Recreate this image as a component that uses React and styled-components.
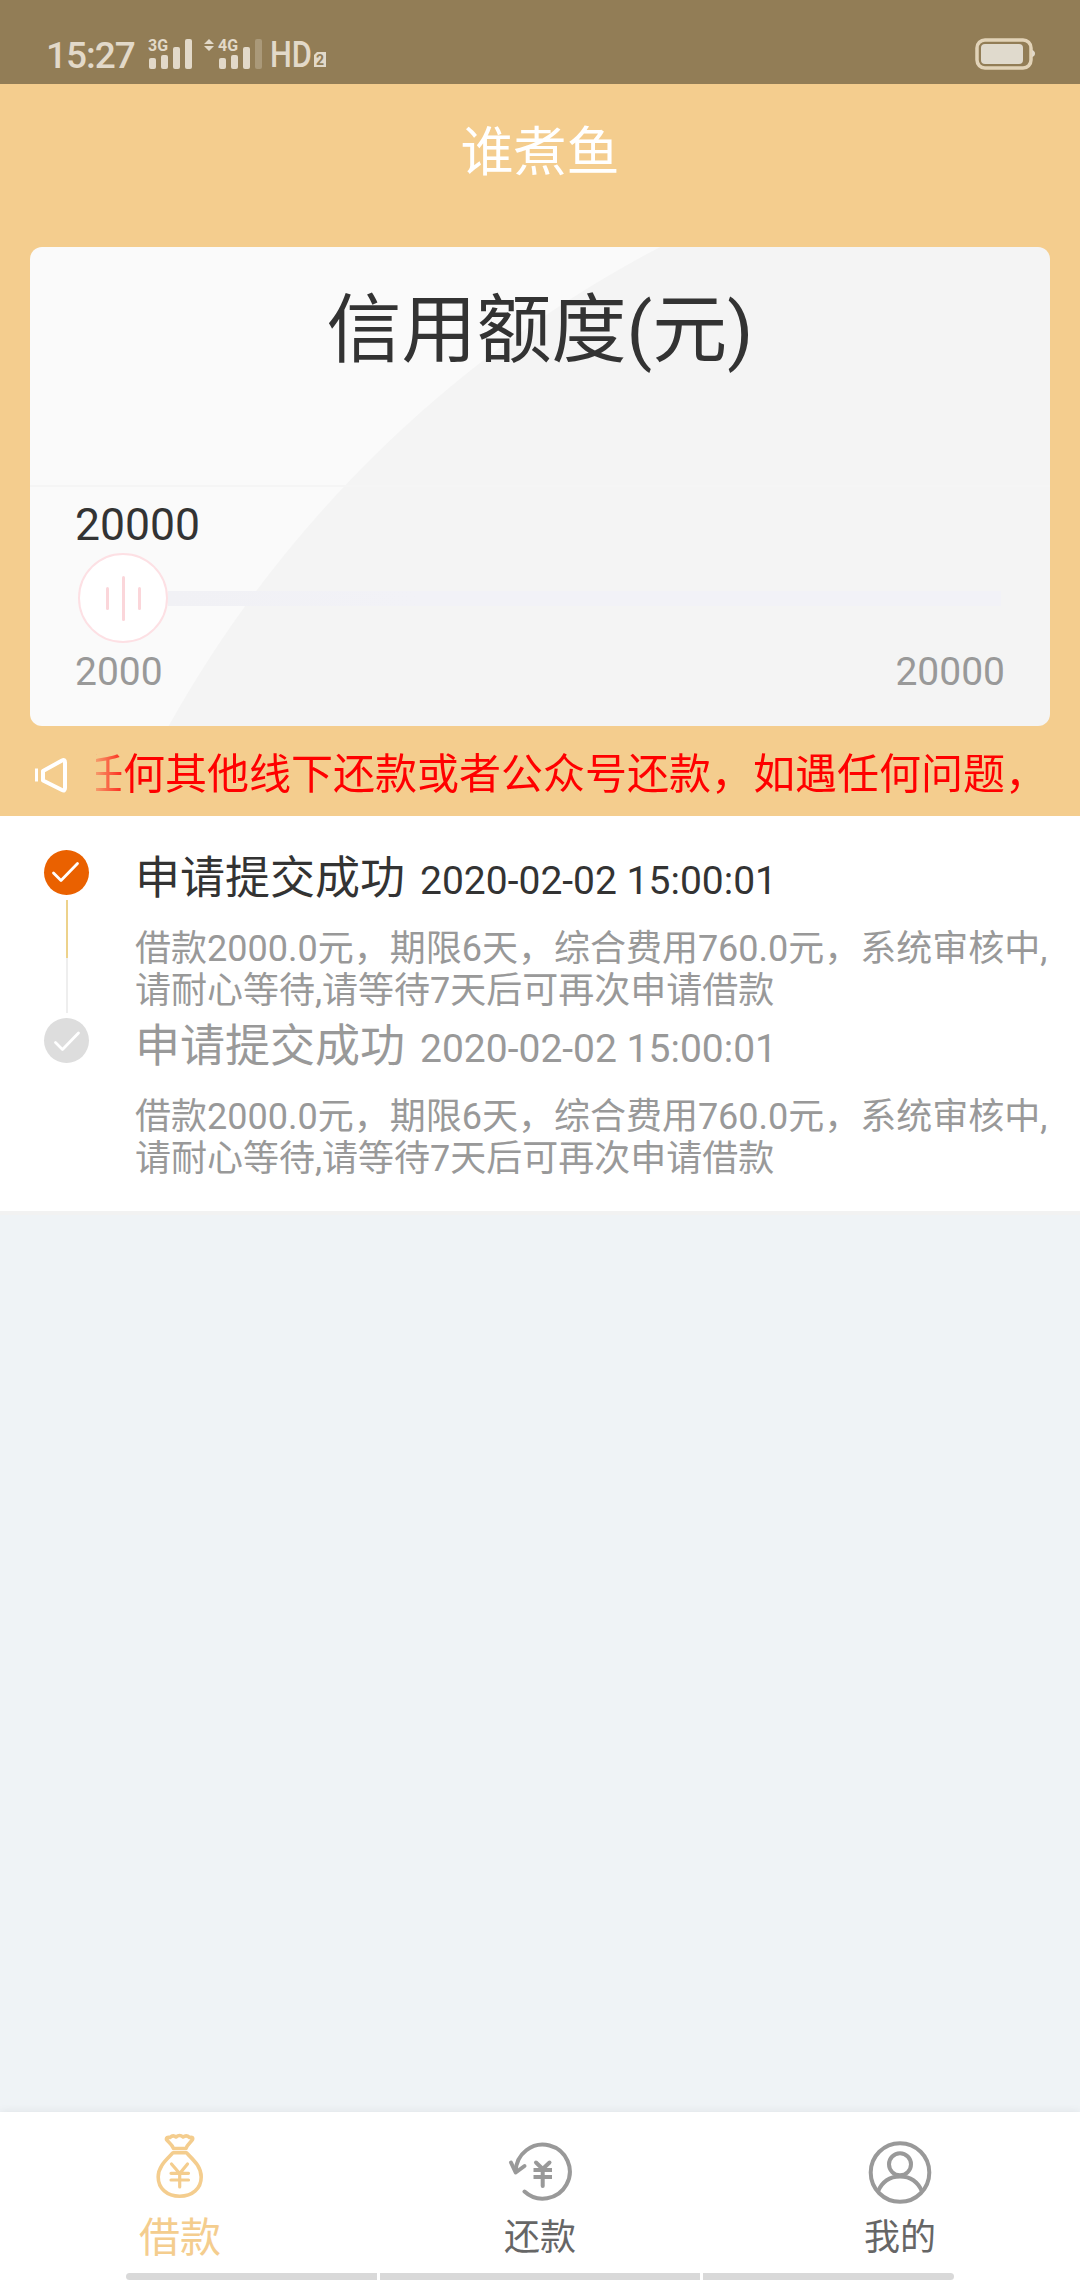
import React, { useState } from "react";
import styled, { createGlobalStyle } from "styled-components";

const GlobalStyle = createGlobalStyle`
  * {
    box-sizing: border-box;
  }
  body {
    margin: 0;
    background-color: #eff3f6;
    font-family: Roboto, "Noto Sans CJK SC", sans-serif;
    color: #333;
  }
`;

const Page = styled.div`
  display: flex;
  flex-direction: column;
  height: 2280px;
  width: 1080px;
  overflow: hidden;
`;

const StatusBar = styled.div`
  display: flex;
  align-items: flex-end;
  justify-content: space-between;
  height: 84px;
  padding: 0 44px 10px 46px;
  background-color: #927d56;
  color: #e2d9c9;
`;

const StatusGroup = styled.div`
  display: flex;
  align-items: flex-end;
`;

const Clock = styled.span`
  width: 102px;
  font-size: 37px;
  font-weight: 500;
  line-height: 36px;
  letter-spacing: -1px;
`;

const Header = styled.header`
  height: 732px;
  padding: 0 30px;
  background-color: #f4cd8e;
`;

const AppTitle = styled.h1`
  margin: 0;
  height: 163px;
  padding-top: 29px;
  font-size: 53px;
  font-weight: 400;
  line-height: 80px;
  text-align: center;
  color: #fff;
`;

const Card = styled.section`
  display: flex;
  flex-direction: column;
  height: 479px;
  border-radius: 12px;
  background: radial-gradient(
    circle at 1187px 1063px,
    #f4f4f4 1199.5px,
    #fafafa 1200.5px
  );
`;

const CardTitle = styled.h2`
  margin: 0;
  height: 240px;
  padding-top: 28px;
  border-bottom: 2px solid #f5f5f5;
  font-size: 75px;
  font-weight: 400;
  line-height: 110px;
  text-align: center;
`;

const SliderArea = styled.div`
  padding: 12px 45px 0;
`;

const Amount = styled.div`
  height: 53px;
  font-size: 44.5px;
  line-height: 52px;
`;

const SliderTrack = styled.div`
  display: flex;
  align-items: center;
  height: 92px;
  padding-left: 3px;
`;

const Thumb = styled.div`
  display: flex;
  align-items: center;
  justify-content: center;
  gap: 13px;
  width: 90px;
  height: 90px;
  border: 2px solid #fde0e4;
  border-radius: 50%;
  background-color: #fff;
`;

const Grip = styled.span`
  width: 3px;
  height: ${(props) => (props.$tall ? 45 : 23)}px;
  border-radius: 2px;
  background-color: #fbd6da;
`;

const Rail = styled.div`
  flex: 1;
  height: 15px;
  margin-right: 4px;
  background: linear-gradient(to right, #f1f1f5, #f2f2f7 30%);
`;

const Range = styled.div`
  display: flex;
  justify-content: space-between;
  padding-top: 5px;
  font-size: 39px;
  line-height: 46px;
  color: #999;
`;

const Notice = styled.div`
  display: flex;
  align-items: center;
  height: 90px;
  padding: 8px 0 0 2px;
`;

const NoticeText = styled.div`
  flex: 1;
  margin: 0 12px 0 29px;
  overflow: hidden;
  font-size: 42px;
  line-height: 60px;
  white-space: nowrap;
  color: #f00;
  mask-image: linear-gradient(to right, transparent -12px, #000 36px);
`;

const Marquee = styled.span`
  display: inline-block;
  margin-left: -15px;
`;

const Steps = styled.section`
  height: 399px;
  padding-top: 34px;
  border-bottom: 4px solid #f2f2f2;
  background-color: #fff;
`;

const Step = styled.div`
  display: flex;
  height: 168px;
`;

const StepRail = styled.div`
  display: flex;
  flex-direction: column;
  align-items: center;
  width: 135px;
  padding-right: 2px;
`;

const Dot = styled.div`
  width: 45px;
  height: 45px;
  border-radius: 50%;
  background-color: ${(props) => (props.$active ? "#ea6100" : "#ddd")};
`;

const StepLine = styled.div`
  width: 2px;
  height: 113px;
  margin-top: 5px;
  background: linear-gradient(#edd28b 58px, #eee 58px);
`;

const StepTitle = styled.div`
  display: flex;
  align-items: baseline;
  height: 78px;
  padding-top: 1px;
  font-size: 45px;
  line-height: 56px;
  color: ${(props) => (props.$active ? "#333" : "#999")};
`;

const StepDate = styled.span`
  margin-left: 15px;
  font-size: 39px;
`;

const StepText = styled.p`
  margin: 0;
  font-size: 36px;
  line-height: 42px;
  white-space: pre;
  color: #999;
`;

const TabBar = styled.nav`
  display: flex;
  flex-direction: column;
  justify-content: space-between;
  height: 168px;
  margin-top: auto;
  background-color: #fff;
  box-shadow: 0 -1px 8px rgba(0, 0, 0, 0.06);
`;

const Tabs = styled.div`
  display: grid;
  grid-template-columns: repeat(3, 1fr);
`;

const Tab = styled.div`
  display: flex;
  flex-direction: column;
  align-items: center;
  gap: 9px;
  padding-top: 21px;
  cursor: pointer;
`;

const TabIcon = styled.div`
  display: flex;
  align-items: flex-end;
  height: 72px;
  color: ${(props) => (props.$active ? "#f4cd8e" : "#999")};
`;

const TabLabel = styled.span`
  font-size: ${(props) => (props.$active ? 41 : 36)}px;
  line-height: 48px;
  color: ${(props) => (props.$active ? "#f4cd8e" : "#666")};
`;

const GestureBar = styled.div`
  display: grid;
  grid-template-columns: 251px 320px 251px;
  gap: 3px;
  width: 828px;
  height: 7px;
  margin: 0 auto;
  border-radius: 4px;
  overflow: hidden;
`;

const GestureHint = styled.span`
  background-color: #d9d9d9;
`;

function Signal({ label, arrows, level }) {
  const heights = [11, 14, 22, 30];
  const offset = arrows ? 15 : 0;
  const width = arrows ? 67 : 55;
  return (
    <svg width={width} height="44" viewBox={`0 -8 ${width} 44`} fill="currentColor">
      {arrows && <path d="M6 1l5 5H1zM6 13l5-5H1z" />}
      <text x={offset} y="13" fontSize="16" fontWeight="700" textLength="20" lengthAdjust="spacingAndGlyphs">
        {label}
      </text>
      {heights.map((h, i) => (
        <rect
          key={h}
          x={offset + 1 + i * 12}
          y={31 - h}
          width="7"
          height={h}
          rx="2"
          opacity={i < level ? 1 : 0.3}
        />
      ))}
    </svg>
  );
}

const HdSvg = styled.svg`
  margin-bottom: -8px;
`;

function HdBadge() {
  return (
    <HdSvg width="62" height="52" viewBox="0 -8 62 52" fill="currentColor">
      <text x="0" y="29" fontSize="36" fontWeight="500" textLength="42" lengthAdjust="spacingAndGlyphs">
        HD
      </text>
      <path d="M47 14h9v15H44V17z" />
      <text x="46" y="27" fontSize="14" fontWeight="700" fill="#927d56">
        2
      </text>
    </HdSvg>
  );
}

function Battery() {
  return (
    <svg width="61" height="36" fill="none">
      <rect x="2" y="2" width="54" height="28" rx="8" stroke="#e2d3b8" strokeWidth="3.5" />
      <rect x="6" y="6" width="42" height="20" rx="4" fill="#e0dacd" />
      <path d="M57 12q3 1 3 3.500t-3 3.500z" fill="#e2d9c9" />
    </svg>
  );
}

function SpeakerIcon() {
  return (
    <svg width="35" height="40" fill="none" stroke="#fff" strokeWidth="4" strokeLinejoin="round">
      <path d="M11 16L30 5.500Q33 4 33 7.500V33Q33 36.500 30 35L11 25.500z" />
      <path d="M4.500 13.500v13" strokeWidth="3" />
    </svg>
  );
}

function CheckIcon({ active }) {
  return (
    <svg width="45" height="45" fill="none" stroke="#fff" strokeWidth="2.800" strokeLinecap="round" strokeLinejoin="round">
      <path d={active ? "M9.500 23l7.500 7.500L33.500 13.500" : "M11.500 24.500l7 7L34.500 15"} />
    </svg>
  );
}

function BagIcon() {
  return (
    <svg width="48" height="72" fill="none" stroke="currentColor" strokeWidth="3.600" strokeLinecap="round" strokeLinejoin="round">
      <path d="M17.500 15.500C16 11 12 9 10.500 6.500Q10 3.500 14 4.500Q17 1.500 20 4Q23.700 1 27 4Q30.500 1.500 33.500 4.500Q37.500 3.500 36.500 6.500C35 9 31.500 11 30 15.500z" />
      <path d="M17 19.800C9 28 2.200 34 2.200 44C2.200 55.500 11 63.300 23.700 63.300S45.200 55.500 45.200 44C45.200 34 38.500 28 30.500 19.800z" />
      <path d="M15.500 31l8.200 9.500L31.500 31M23.700 40.500V54M15 40.300h17.500M15 47h17.500" strokeWidth="3.200" />
    </svg>
  );
}

function RepayIcon() {
  return (
    <svg width="64" height="65" fill="none" stroke="currentColor" strokeWidth="4" strokeLinecap="round" strokeLinejoin="round">
      <path d="M16.500 51.500A27 27 0 1 0 7.800 31.500" />
      <path d="M3 22.500l4.700 10L16.500 26" />
      <path d="M28 22.500l6.700 6.500L41.500 22.500M34.700 29v17" />
      <path d="M25.500 30h18.500M25.500 37h18.500" strokeLinecap="butt" />
    </svg>
  );
}

function UserIcon() {
  return (
    <svg width="64" height="65" fill="none" stroke="currentColor" strokeWidth="4">
      <circle cx="32" cy="32.500" r="29.300" />
      <circle cx="32" cy="24.300" r="11" />
      <path d="M10 51.500C14 42 22 36.500 32 36.500S50 42 54 51.500" />
    </svg>
  );
}

const steps = [
  { id: 1, active: true },
  { id: 2, active: false },
];

const tabs = [
  { name: "借款", Icon: BagIcon },
  { name: "还款", Icon: RepayIcon },
  { name: "我的", Icon: UserIcon },
];

function App() {
  const [tab, setTab] = useState("借款");

  return (
    <Page>
      <GlobalStyle />
      <StatusBar>
        <StatusGroup>
          <Clock>15:27</Clock>
          <Signal label="3G" level={4} />
          <Signal label="4G" level={3} arrows />
          <HdBadge />
        </StatusGroup>
        <Battery />
      </StatusBar>

      <Header>
        <AppTitle>谁煮鱼</AppTitle>
        <Card>
          <CardTitle>信用额度(元)</CardTitle>
          <SliderArea>
            <Amount>20000</Amount>
            <SliderTrack>
              <Thumb>
                <Grip />
                <Grip $tall />
                <Grip />
              </Thumb>
              <Rail />
            </SliderTrack>
            <Range>
              <span>2000</span>
              <span>20000</span>
            </Range>
          </SliderArea>
        </Card>
        <Notice>
          <SpeakerIcon />
          <NoticeText>
            <Marquee>任何其他线下还款或者公众号还款，如遇任何问题，</Marquee>
          </NoticeText>
        </Notice>
      </Header>

      <Steps>
        {steps.map((step) => (
          <Step key={step.id}>
            <StepRail>
              <Dot $active={step.active}>
                <CheckIcon active={step.active} />
              </Dot>
              {step.active && <StepLine />}
            </StepRail>
            <div>
              <StepTitle $active={step.active}>
                申请提交成功
                <StepDate>2020-02-02 15:00:01</StepDate>
              </StepTitle>
              <StepText>
                {"借款2000.0元，期限6天，综合费用760.0元，系统审核中,\n请耐心等待,请等待7天后可再次申请借款"}
              </StepText>
            </div>
          </Step>
        ))}
      </Steps>

      <TabBar>
        <Tabs>
          {tabs.map(({ name, Icon }) => (
            <Tab key={name} onClick={() => setTab(name)}>
              <TabIcon $active={tab === name}>
                <Icon />
              </TabIcon>
              <TabLabel $active={tab === name}>{name}</TabLabel>
            </Tab>
          ))}
        </Tabs>
        <GestureBar>
          <GestureHint />
          <GestureHint />
          <GestureHint />
        </GestureBar>
      </TabBar>
    </Page>
  );
}

export default App;
